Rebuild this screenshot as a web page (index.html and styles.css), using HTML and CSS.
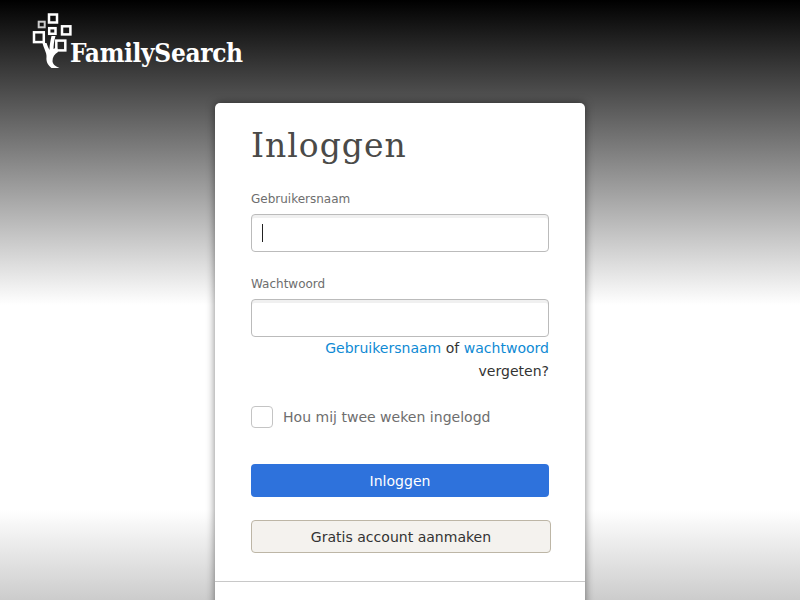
FILE: index.html
```html
<!DOCTYPE html>
<html lang="nl">
<head>
    <meta charset="UTF-8">
    <title>Inloggen - FamilySearch</title>
    <link rel="stylesheet" href="styles.css">
</head>
<body>

<!-- Logo -->
<div class="logo">
    <svg class="logo-tree" width="42" height="58" viewBox="0 0 42 58">
        <g class="logo-boxes">
            <rect x="17" y="2.5" width="8" height="8"/>
            <rect class="logo-box-small" x="6.7" y="9.7" width="6" height="5.6"/>
            <rect x="17.2" y="16.2" width="6.3" height="5.6"/>
            <rect x="30" y="14.3" width="8.4" height="8.1"/>
            <rect x="2" y="20.3" width="9.8" height="9.8"/>
            <rect x="24.3" y="28.6" width="9" height="9.8"/>
        </g>
        <path class="logo-trunk" d="M10.5 31 L14.5 31 C15.5 34 16.5 36 17.5 38 C17.5 33 18.5 28 19.5 24 L23.5 24 C22 29 21.5 34 21.5 37 L25 35 L26 40 C22.5 42 20.5 45 20.5 49 C20.5 52 23 54 27.5 56 L19.5 56 C15.5 53 14 49 14.5 45 C15 41 11.5 36 10.5 31 Z"/>
    </svg>
    <span class="logo-text">FamilySearch</span>
</div>

<!-- Login card -->
<div class="card">
    <h1>Inloggen</h1>

    <label class="field-label" for="username">Gebruikersnaam</label>
    <div class="input-box"><span class="caret"></span></div>

    <label class="field-label password-label" for="password">Wachtwoord</label>
    <div class="input-box"></div>

    <p class="forgot"><a href="#">Gebruikersnaam</a> of <a href="#">wachtwoord</a> vergeten?</p>

    <div class="remember">
        <span class="checkbox"></span>
        <span>Hou mij twee weken ingelogd</span>
    </div>

    <a class="btn btn-primary" href="#">Inloggen</a>
    <a class="btn btn-secondary" href="#">Gratis account aanmaken</a>

    <div class="divider"></div>
</div>

</body>
</html>
```

FILE: styles.css
```css
/* Base Styles */
* {
    margin: 0;
    padding: 0;
    box-sizing: border-box;
}

html {
    height: 100%;
    overflow: hidden;
}

body {
    height: 600px;
    overflow: hidden;
    font-family: "DejaVu Sans", sans-serif;
    background: linear-gradient(#000 0, #fff 305px, #fff 510px, #ccc 600px);
}

/* Logo */
.logo {
    display: flex;
    align-items: flex-start;
    height: 70px;
    padding: 12px 0 0 32px;
}

.logo-boxes rect {
    fill: none;
    stroke: #fff;
    stroke-width: 2.5;
}

.logo-boxes .logo-box-small {
    stroke: #ccc;
    stroke-width: 2;
}

.logo-trunk {
    fill: #fff;
}

.logo-text {
    margin: 25px 0 0 -4px;
    font-family: "DejaVu Serif", serif;
    font-stretch: condensed;
    font-size: 26px;
    font-weight: bold;
    letter-spacing: -0.35px;
    line-height: 32px;
    color: #fff;
}

/* Card */
.card {
    width: 370px;
    height: 520px;
    margin: 33px auto 0;
    padding: 24px 36px 0;
    background: #fff;
    border-radius: 5px;
    box-shadow: 0 0 8px rgba(0, 0, 0, 0.5);
}

.card h1 {
    font-family: "DejaVu Serif", serif;
    font-size: 33px;
    font-weight: normal;
    letter-spacing: 1px;
    line-height: 38px;
    color: #4a4a48;
}

.field-label {
    display: block;
    margin-top: 25px;
    font-size: 12px;
    line-height: 18px;
    color: #6e6e6e;
}

.password-label {
    margin-top: 23px;
}

.input-box {
    display: flex;
    align-items: center;
    height: 38px;
    margin-top: 6px;
    padding-left: 10px;
    background: #fff;
    border: 1px solid #bbb;
    border-radius: 4px;
    box-shadow: inset 0 3px 0 #f0f0f0;
}

.caret {
    width: 1px;
    height: 18px;
    background: #222;
}

.forgot {
    font-size: 14.04px;
    line-height: 23px;
    text-align: right;
    color: #333;
}

.forgot a {
    color: #0e8ad4;
    text-decoration: none;
}

.remember {
    display: flex;
    align-items: center;
    gap: 10px;
    margin-top: 23px;
    font-size: 14.04px;
    line-height: 22px;
    color: #6e6e6e;
}

.checkbox {
    width: 22px;
    height: 22px;
    border: 1px solid #c4c4c4;
    border-radius: 4px;
}

.btn {
    display: block;
    font-size: 14.04px;
    text-align: center;
    text-decoration: none;
    border-radius: 4px;
}

.btn-primary {
    width: 298px;
    height: 33px;
    margin-top: 36px;
    padding-top: 1px;
    line-height: 33px;
    color: #fff;
    background: #2e72dc;
}

.btn-secondary {
    width: 300px;
    height: 33px;
    margin-top: 23px;
    padding-top: 1px;
    line-height: 31px;
    color: #333;
    background: #f4f2ee;
    border: 1px solid #bdb6a6;
}

.divider {
    height: 1px;
    margin: 28px -36px 0;
    background: #c8c8c8;
}
```
